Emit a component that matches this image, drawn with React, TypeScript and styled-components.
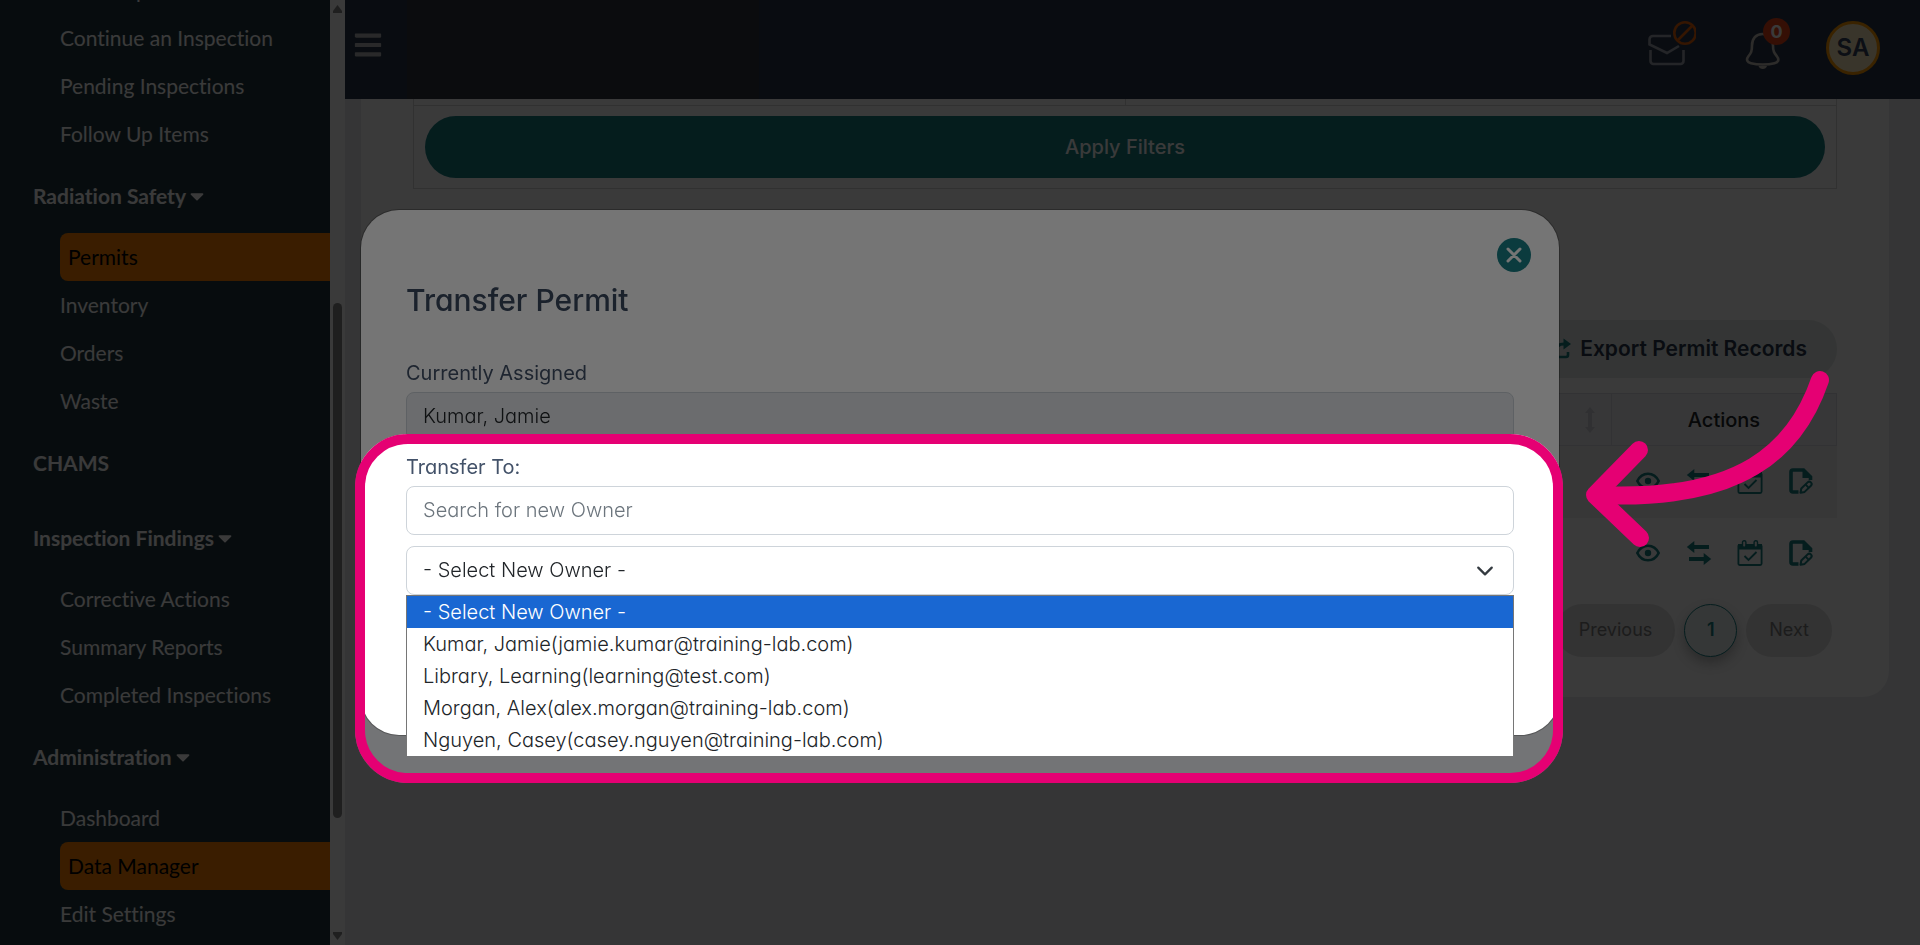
import React from 'react';
import styled, { createGlobalStyle } from 'styled-components';
import { FaBars, FaCaretDown } from 'react-icons/fa';

const GlobalStyle = createGlobalStyle`
  *, *::before, *::after { box-sizing: border-box; }
  body {
    margin: 0;
    overflow: hidden;
    background: #e7e8ec;
    font-family: Inter, "Liberation Sans", sans-serif;
    font-feature-settings: "cv11" 1;
    font-size: 20px;
    line-height: 30px;
    color: #212529;
  }
  button, input, select { font: inherit; font-feature-settings: inherit; color: inherit; }
  button { cursor: pointer; border: 0; padding: 0; background: none; }
`;

const Page = styled.div`
  display: flex;
  height: 100vh;
  overflow: hidden;
`;

/* ---------- sidebar ---------- */

const Sidebar = styled.aside`
  display: flex;
  flex: 0 0 345px;
  height: 100%;
  background: #233941;
  font-family: Lato, sans-serif;
  font-size: 21px;
  font-variant-ligatures: none;
`;

const SidebarScroll = styled.nav`
  flex: 1;
  overflow: hidden;
`;

const NavList = styled.div`
  display: flex;
  flex-direction: column;
  margin-top: -34px;
`;

const NavGroup = styled.a`
  display: flex;
  align-items: center;
  height: 75px;
  padding-left: 33px;
  color: #fff;
  font-weight: 700;
  text-decoration: none;
`;

const NavItem = styled.a<{ $active?: boolean }>`
  display: flex;
  align-items: center;
  height: 48px;
  margin-left: 60px;
  padding-left: ${(p) => (p.$active ? 8 : 0)}px;
  border-radius: 8px 0 0 8px;
  background: ${(p) => (p.$active ? '#fc8200' : 'transparent')};
  color: ${(p) => (p.$active ? '#000' : '#fff')};
  text-decoration: none;
`;

const ScrollTrack = styled.div`
  display: grid;
  grid-template-rows: 16px 286fr 515fr 110fr 16px;
  justify-items: center;
  align-items: center;
  width: 15px;
  padding: 1px 0;
  background: #fcfcfc;
`;

const ScrollThumb = styled.div`
  grid-row: 3;
  width: 9px;
  height: 100%;
  border-radius: 5px;
  background: #8b8b8b;
`;

const ScrollArrow = styled.svg<{ $row: number }>`
  grid-row: ${(p) => p.$row};
  width: 9px;
  height: 8px;
  fill: #8b8b8b;
`;

/* ---------- top bar ---------- */

const Main = styled.div`
  display: flex;
  flex: 1;
  flex-direction: column;
  min-width: 0;
`;

const TopBar = styled.header`
  display: flex;
  align-items: center;
  flex: 0 0 99px;
  padding-right: 40px;
  background: #2b394e;
`;

const MenuButton = styled.button`
  display: flex;
  margin-left: 8px;
  padding-bottom: 10px;
  color: #b4b4b8;
`;

const LogoPlate = styled.div`
  width: 352px;
  height: 100%;
  margin-left: 24px;
  background: #333640;
`;

const TopActions = styled.div`
  display: flex;
  align-items: center;
  margin-left: auto;
  padding-bottom: 3px;
`;

const IconButton = styled.button`
  position: relative;
  display: flex;
  width: 48px;
  height: 54px;
  & + & { margin-left: 46px; }
`;

const CountBadge = styled.span`
  position: absolute;
  top: -3px;
  right: 0;
  width: 27px;
  border-radius: 14px;
  background: #e64419;
  color: #fff;
  font-weight: 700;
  font-size: 18px;
  line-height: 27px;
  text-align: center;
`;

const Avatar = styled.button`
  width: 54px;
  height: 54px;
  margin-left: 36px;
  border: 3px solid #ff9c00;
  border-radius: 50%;
  background: #f8e8bf;
  color: #36435c;
  font-size: 24px;
  font-weight: 600;
`;

/* ---------- permit records card ---------- */

const Card = styled.main`
  margin: 0 31px 0 16px;
  padding: 0 52px 40px;
  border-radius: 0 0 26px 26px;
  background: #fcfcfc;
`;

const FilterBox = styled.section`
  border: 1px solid #d8d8d8;
  border-top: 0;
`;

const FilterColumns = styled.div`
  display: grid;
  grid-template-columns: 1fr 1fr;
  height: 7px;
  border-bottom: 1px solid #d8d8d8;
`;

const FilterColumn = styled.div`
  & + & { border-left: 1px solid #d8d8d8; }
`;

const FilterFooter = styled.div`
  padding: 10px 11px;
`;

const ApplyButton = styled.button`
  width: 100%;
  height: 62px;
  border-radius: 31px;
  background: #167e83;
  color: #fff;
  font-weight: 500;
`;

const ExportRow = styled.div`
  display: flex;
  justify-content: flex-end;
  margin-top: 131px;
`;

const ExportButton = styled.button`
  display: flex;
  align-items: center;
  gap: 9px;
  height: 58px;
  padding: 0 30px;
  border-radius: 29px;
  background: #e2eae7;
  color: #2b394e;
  font-size: 21px;
  font-weight: 600;
`;

const RecordsTable = styled.table`
  width: 100%;
  margin-top: 15px;
  border-collapse: collapse;
  table-layout: fixed;
`;

const HeadCell = styled.th<{ $width?: number }>`
  width: ${(p) => (p.$width ? `${p.$width}px` : 'auto')};
  height: 52px;
  padding: 0 16px;
  border: 1px solid #dcdce4;
  background: #f2f2f7;
  color: #212529;
  font-weight: 500;
`;

const SortButton = styled.button`
  display: flex;
  margin-left: auto;
`;

const BodyRow = styled.tr`
  height: 72px;
  &:nth-child(odd) { background: #f1f1f1; }
`;

const BodyCell = styled.td`
  padding: 0 0 2px;
`;

const RowActions = styled.div`
  display: flex;
  align-items: center;
  justify-content: center;
  gap: 25px;
`;

const RowAction = styled.button`
  display: flex;
  width: 26px;
  height: 26px;
  color: #167e83;
`;

const Pagination = styled.nav`
  display: flex;
  justify-content: flex-end;
  gap: 9px;
  margin-top: 14px;
  padding-right: 5px;
`;

const PageButton = styled.button<{ $current?: boolean }>`
  height: 53px;
  min-width: 53px;
  padding: 0 ${(p) => (p.$current ? 0 : 23)}px;
  border: ${(p) => (p.$current ? '1px solid #167e83' : '0')};
  border-radius: 27px;
  background: ${(p) => (p.$current ? '#eaf0f0' : '#dedede')};
  box-shadow: ${(p) => (p.$current ? '0 6px 12px rgba(0, 0, 0, 0.25)' : 'none')};
  color: ${(p) => (p.$current ? '#167e83' : '#7c7c7c')};
  font-size: 18px;
  font-weight: ${(p) => (p.$current ? 600 : 400)};
`;

/* ---------- modal ---------- */

const Backdrop = styled.div`
  position: fixed;
  inset: 0;
  padding: 210px 24px 0;
  background: rgba(0, 0, 0, 0.5);
`;

const Dialog = styled.div`
  position: relative;
  display: flex;
  flex-direction: column;
  max-width: 1198px;
  min-height: 525px;
  margin: 0 auto;
  padding: 28px 45px 40px;
  border-radius: 38px;
  background: #fff;
  box-shadow: 0 0 0 1px rgba(0, 0, 0, 0.25);
`;

const CloseButton = styled.button`
  display: flex;
  align-items: center;
  justify-content: center;
  align-self: flex-end;
  width: 34px;
  height: 34px;
  margin-right: -17px;
  border-radius: 50%;
  background: #188087;
`;

const Title = styled.h2`
  margin: 8px 0 38px;
  color: #3b4a61;
  font-size: 30px;
  font-weight: 500;
  line-height: 40px;
`;

const Label = styled.label`
  margin-bottom: 4px;
  color: #435269;
`;

const TextInput = styled.input`
  width: 100%;
  height: 49px;
  margin-bottom: 11px;
  padding: 0 16px 2px;
  border: 1px solid #ced4da;
  border-radius: 8px;
  background: #fff;
  outline: 0;
  font-weight: 300;
  &:disabled { background: #e9ecef; color: #212529; }
  &::placeholder { color: #6c757d; opacity: 1; }
`;

const SelectWrap = styled.div`
  position: relative;
  font-weight: 300;
`;

const OwnerSelect = styled.select`
  display: block;
  width: 100%;
  height: 49px;
  padding: 0 16px 2px;
  border: 1px solid #ced4da;
  border-radius: 8px;
  appearance: none;
  background: #fff;
`;

const SelectChevron = styled.svg`
  position: absolute;
  top: 16px;
  right: 19px;
  width: 20px;
  height: 18px;
  pointer-events: none;
`;

const OptionList = styled.ul`
  position: absolute;
  top: 100%;
  left: 0;
  right: 0;
  margin: 0;
  padding: 0;
  border: 1px solid #767676;
  border-bottom: 0;
  background: #fff;
  list-style: none;
`;

const OptionItem = styled.li<{ $selected?: boolean }>`
  padding: 0 16px;
  line-height: 32px;
  background: ${(p) => (p.$selected ? '#1967d2' : '#fff')};
  color: ${(p) => (p.$selected ? '#fff' : '#212529')};
`;

/* ---------- guide annotations ---------- */

const Spotlight = styled.div`
  position: absolute;
  top: 224px;
  right: -4px;
  bottom: -48px;
  left: -6px;
  border: 10px solid #e50073;
  border-radius: 53px;
  box-shadow: 0 0 0 3000px rgba(0, 0, 0, 0.54);
  pointer-events: none;
`;

const GuideArrow = styled.svg`
  position: absolute;
  top: 150px;
  left: 100%;
  width: 300px;
  height: 200px;
  margin-left: 21px;
  pointer-events: none;
`;

const owners = [
  '- Select New Owner -',
  'Kumar, Jamie(jamie.kumar@training-lab.com)',
  'Library, Learning(learning@test.com)',
  'Morgan, Alex(alex.morgan@training-lab.com)',
  'Nguyen, Casey(casey.nguyen@training-lab.com)',
];

type Entry = { label: string; group?: boolean; caret?: boolean; active?: boolean };

const navigation: Entry[] = [
  { label: 'Start Inspection' },
  { label: 'Continue an Inspection' },
  { label: 'Pending Inspections' },
  { label: 'Follow Up Items' },
  { label: 'Radiation Safety', group: true, caret: true },
  { label: 'Permits', active: true },
  { label: 'Inventory' },
  { label: 'Orders' },
  { label: 'Waste' },
  { label: 'CHAMS', group: true },
  { label: 'Inspection Findings', group: true, caret: true },
  { label: 'Corrective Actions' },
  { label: 'Summary Reports' },
  { label: 'Completed Inspections' },
  { label: 'Administration', group: true, caret: true },
  { label: 'Dashboard' },
  { label: 'Data Manager', active: true },
  { label: 'Edit Settings' },
];

const MailIcon = () => (
  <svg width="48" height="54" viewBox="0 0 48 54" fill="none">
    <path d="M23 15H5a3.500 3.500 0 0 0-3.500 3.500v5L19 32l12-7" stroke="#a0a4ae" strokeWidth="2.600" />
    <path d="M2.500 29v11a3 3 0 0 0 3 3h27a3 3 0 0 0 3-3V29" stroke="#a0a4ae" strokeWidth="2.600" />
    <circle cx="37" cy="12" r="10.700" stroke="#e66009" strokeWidth="2.600" />
    <path d="M30 19l14-14" stroke="#e66009" strokeWidth="2.600" />
  </svg>
);

const BellIcon = () => (
  <svg width="48" height="54" viewBox="0 0 48 54" fill="none">
    <path
      d="M20.500 13c-6.500 0-10.500 4.800-10.500 11.500 0 6-1 7.500-3.400 10.500-3 4-1.300 6.200 2.400 7.200 6.500 1.700 17 1.700 23.500 0 3.700-1 5.200-3.200 2.200-7.200-2.400-3-3.700-4.500-3.700-10.500 0-6.700-4-11.500-10.500-11.500z"
      stroke="#c6c0ba"
      strokeWidth="2.600"
    />
    <path d="M16.500 45h8.500c-.6 2-2.200 3-4.200 3s-3.700-1-4.300-3z" fill="#c6c0ba" />
  </svg>
);

const EyeIcon = () => (
  <svg width="26" height="26" viewBox="0 0 26 26" fill="none">
    <path d="M2.300 13C4.500 8.500 8.500 5.700 13 5.700S21.500 8.500 23.700 13c-2.200 4.500-6.200 7.300-10.700 7.300S4.500 17.500 2.300 13z" stroke="currentColor" strokeWidth="2.600" strokeLinejoin="round" />
    <circle cx="13" cy="13" r="3.200" fill="currentColor" />
  </svg>
);

const TransferIcon = () => (
  <svg width="26" height="26" viewBox="0 0 26 26" fill="currentColor">
    <path d="M.8 7L8.300 1v4H23v4H8.300v4z" />
    <path d="M25.200 19l-7.500-6v4H3v4h14.700v4z" />
  </svg>
);

const CalendarIcon = () => (
  <svg width="26" height="26" viewBox="0 0 26 26" fill="none">
    <rect x="1.400" y="4.800" width="23.200" height="20.200" rx="1.500" stroke="currentColor" strokeWidth="1.800" />
    <path d="M1 4h24v5.500H1z" fill="currentColor" />
    <rect x="5.500" y=".8" width="3.400" height="6.400" rx="1.500" fill="#f6f6f6" stroke="currentColor" strokeWidth="1.400" />
    <rect x="17.100" y=".8" width="3.400" height="6.400" rx="1.500" fill="#f6f6f6" stroke="currentColor" strokeWidth="1.400" />
    <path d="M7.500 16l4 4 8-8" stroke="currentColor" strokeWidth="1.800" />
  </svg>
);

const EditFileIcon = () => (
  <svg width="26" height="26" viewBox="0 0 26 26" fill="none">
    <path d="M10.500 24H5a2 2 0 0 1-2-2V4a2 2 0 0 1 2-2h10.500L22.500 9v3" stroke="currentColor" strokeWidth="3.600" />
    <path d="M14.500 1L24 10H14.500z" fill="currentColor" />
    <path d="M12.500 24.800l.8-4.300 6.300-6.100a2.300 2.300 0 0 1 3.300 3.300l-6.300 6.200z" fill="#f6f6f6" stroke="currentColor" strokeWidth="2" strokeLinejoin="round" />
    <path d="M17.500 16.500l3.300 3.300" stroke="currentColor" strokeWidth="1.800" />
  </svg>
);

const SortIcon = () => (
  <svg width="10" height="26" viewBox="0 0 10 26" fill="#d4d4da">
    <path d="M5 0l5 6H7v14h3l-5 6-5-6h3V6H0z" />
  </svg>
);

const ShareIcon = () => (
  <svg width="22" height="22" viewBox="0 0 22 22" fill="none">
    <path d="M9 3H4a2 2 0 0 0-2 2v12a2 2 0 0 0 2 2h13a2 2 0 0 0 2-2v-3" stroke="#167e83" strokeWidth="2.600" />
    <path d="M7 13c0-5 3-7 8-7" stroke="#167e83" strokeWidth="3" />
    <path d="M14.500.5L22 6l-7.500 5.500z" fill="#167e83" />
  </svg>
);

const rowActions = [
  { label: 'View permit', Icon: EyeIcon },
  { label: 'Transfer permit', Icon: TransferIcon },
  { label: 'Renew permit', Icon: CalendarIcon },
  { label: 'Edit permit', Icon: EditFileIcon },
];

export default function App() {
  return (
    <>
      <GlobalStyle />
      <Page>
        <Sidebar>
          <SidebarScroll>
            <NavList>
              {navigation.map((entry) =>
                entry.group ? (
                  <NavGroup key={entry.label} href="#">
                    {entry.label}
                    {entry.caret && <FaCaretDown size={22} />}
                  </NavGroup>
                ) : (
                  <NavItem key={entry.label} href="#" $active={entry.active}>
                    {entry.label}
                  </NavItem>
                ),
              )}
            </NavList>
          </SidebarScroll>
          <ScrollTrack>
            <ScrollArrow $row={1} viewBox="0 0 9 8"><path d="M4.500 0L9 6v2H0V6z" /></ScrollArrow>
            <ScrollThumb />
            <ScrollArrow $row={5} viewBox="0 0 9 8"><path d="M4.500 8L9 2V0H0v2z" /></ScrollArrow>
          </ScrollTrack>
        </Sidebar>

        <Main>
          <TopBar>
            <MenuButton aria-label="Toggle menu"><FaBars size={30} /></MenuButton>
            <LogoPlate />
            <TopActions>
              <IconButton aria-label="Messages"><MailIcon /></IconButton>
              <IconButton aria-label="Notifications">
                <BellIcon />
                <CountBadge>0</CountBadge>
              </IconButton>
              <Avatar>SA</Avatar>
            </TopActions>
          </TopBar>

          <Card>
            <FilterBox>
              <FilterColumns>
                <FilterColumn />
                <FilterColumn />
              </FilterColumns>
              <FilterFooter>
                <ApplyButton>Apply Filters</ApplyButton>
              </FilterFooter>
            </FilterBox>
            <ExportRow>
              <ExportButton><ShareIcon />Export Permit Records</ExportButton>
            </ExportRow>
            <RecordsTable>
              <thead>
                <tr>
                  <HeadCell><SortButton aria-label="Sort"><SortIcon /></SortButton></HeadCell>
                  <HeadCell $width={225}>Actions</HeadCell>
                </tr>
              </thead>
              <tbody>
                {[0, 1].map((row) => (
                  <BodyRow key={row}>
                    <BodyCell />
                    <BodyCell>
                      <RowActions>
                        {rowActions.map(({ label, Icon }) => (
                          <RowAction key={label} aria-label={label}><Icon /></RowAction>
                        ))}
                      </RowActions>
                    </BodyCell>
                  </BodyRow>
                ))}
              </tbody>
            </RecordsTable>
            <Pagination aria-label="Pages">
              <PageButton>Previous</PageButton>
              <PageButton $current>1</PageButton>
              <PageButton>Next</PageButton>
            </Pagination>
          </Card>
        </Main>
      </Page>

      <Backdrop>
        <Dialog role="dialog" aria-labelledby="transfer-title">
          <CloseButton aria-label="Close">
            <svg width="16" height="16" viewBox="0 0 16 16">
              <path d="M2 2l12 12M14 2L2 14" stroke="#fff" strokeWidth="3" strokeLinecap="round" />
            </svg>
          </CloseButton>
          <Title id="transfer-title">Transfer Permit</Title>
          <Label htmlFor="current-owner">Currently Assigned</Label>
          <TextInput id="current-owner" disabled defaultValue="Kumar, Jamie" />
          <Label htmlFor="owner-search">Transfer To:</Label>
          <TextInput id="owner-search" placeholder="Search for new Owner" />
          <SelectWrap>
            <OwnerSelect aria-label="New owner" defaultValue={owners[0]}>
              {owners.map((owner) => <option key={owner}>{owner}</option>)}
            </OwnerSelect>
            <SelectChevron viewBox="0 0 16 16">
              <path d="M2 5l6 6 6-6" fill="none" stroke="#343a40" strokeWidth="2" strokeLinecap="round" strokeLinejoin="round" />
            </SelectChevron>
            <OptionList>
              {owners.map((owner, index) => (
                <OptionItem key={owner} $selected={index === 0}>{owner}</OptionItem>
              ))}
            </OptionList>
          </SelectWrap>
          <Spotlight />
          <GuideArrow viewBox="1580 360 300 200" fill="none" stroke="#e50073" strokeWidth="18" strokeLinecap="round" strokeLinejoin="round">
            <path d="M1820 380C1796 450 1742 502 1596 495" />
            <path d="M1639 450L1595 495L1640 538" />
          </GuideArrow>
        </Dialog>
      </Backdrop>
    </>
  );
}
